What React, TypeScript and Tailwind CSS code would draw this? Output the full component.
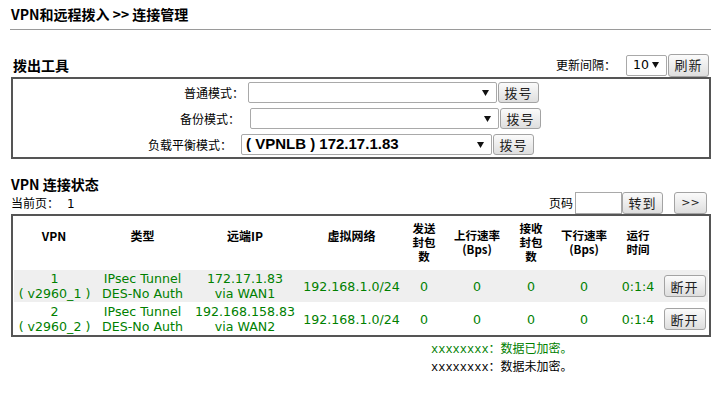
const cols = [82, 95, 110, 103, 42, 64, 44, 62, 46, 48];

function Arrow() {
  return (
    <svg width="7" height="6" viewBox="0 0 7 6" className="shrink-0">
      <path d="M0 0H7L3.5 6Z" fill="#111" />
    </svg>
  );
}

function Select({ w, children }: { w: number; children?: React.ReactNode }) {
  return (
    <div
      className="h-[21px] border border-[#a9a9a9] rounded-[2px] bg-white flex items-center justify-between pl-[4px] pr-[7px] shrink-0"
      style={{ width: w }}
    >
      <span className="truncate">{children}</span>
      <Arrow />
    </div>
  );
}

function Btn({ w, h = 21, children }: { w: number; h?: number; children: React.ReactNode }) {
  return (
    <div
      className="border border-[#a3a3a3] rounded-[3px] bg-linear-to-b from-[#fbfbfb] to-[#dedede] flex items-center justify-center text-[13px] tracking-[1px] text-[#222] shrink-0"
      style={{ width: w, height: h }}
    >
      {children}
    </div>
  );
}

const headers: React.ReactNode[] = [
  "VPN",
  "类型",
  "远端IP",
  "虚拟网络",
  <>发送<br />封包<br />数</>,
  <>上行速率<br />(Bps)</>,
  <>接收<br />封包<br />数</>,
  <>下行速率<br />(Bps)</>,
  <>运行<br />时间</>,
  "",
];

const rows = [
  { id: "1", name: "( v2960_1 )", ip: "172.17.1.83", wan: "via WAN1", bg: "bg-[#efefef]" },
  { id: "2", name: "( v2960_2 )", ip: "192.168.158.83", wan: "via WAN2", bg: "bg-white" },
];

export default function App() {
  return (
    <div className="w-[726px] h-[403px] bg-white pl-[11px] pr-[15px] font-['Noto_Sans_CJK_SC',sans-serif] text-[12px] text-black">
      <div className="pt-[6px] h-[22px] leading-[16px] text-[14px] font-bold">VPN和远程拨入 &gt;&gt; 连接管理</div>
      <div className="mt-[7px] -ml-px h-px bg-[#9a9a9a]" />

      {/* dial-out tools */}
      <div className="mt-[23px] h-[24px] flex items-center justify-between">
        <div className="text-[14px] font-bold pl-[2px]">拨出工具</div>
        <div className="flex items-center mr-[2px]">
          <span className="mr-[10px]">更新间隔：</span>
          <Select w={41}>
            <span className="font-['DejaVu_Sans',sans-serif] text-[12.5px] pl-[2px]">10</span>
          </Select>
          <div className="ml-px">
            <Btn w={41} h={23}>刷新</Btn>
          </div>
        </div>
      </div>
      <div className="h-[82px] border-2 border-[#555] pt-[3px] flex flex-col gap-[5px]">
        <div className="flex items-center h-[21px]">
          <div className="w-[231px] text-right">普通模式：</div>
          <div className="ml-[4px]"><Select w={249} /></div>
          <div className="ml-px"><Btn w={41}>拨号</Btn></div>
        </div>
        <div className="flex items-center h-[21px]">
          <div className="w-[227px] text-right">备份模式：</div>
          <div className="ml-[10px]"><Select w={249} /></div>
          <div className="ml-px"><Btn w={41}>拨号</Btn></div>
        </div>
        <div className="flex items-center h-[21px]">
          <div className="w-[219px] text-right">负载平衡模式：</div>
          <div className="ml-[9px]">
            <Select w={251}>
              <span className="font-['Liberation_Sans',sans-serif] font-bold text-[15px]">( VPNLB ) 172.17.1.83</span>
            </Select>
          </div>
          <div className="ml-px"><Btn w={41}>拨号</Btn></div>
        </div>
      </div>

      {/* connection status */}
      <div className="mt-[17px] leading-[16px] text-[14px] font-bold">VPN 连接状态</div>
      <div className="h-[22px] flex items-center justify-between">
        <div>
          当前页：<span className="ml-[8px] font-['DejaVu_Sans',sans-serif]">1</span>
        </div>
        <div className="flex items-center mr-[4px]">
          <span className="mr-[2px]">页码</span>
          <div className="w-[47px] h-[22px] border border-[#a9a9a9] bg-white" />
          <Btn w={41} h={22}>转到</Btn>
          <div className="ml-[11px]">
            <Btn w={33} h={22}>
              <span className="font-['DejaVu_Sans',sans-serif] text-[11px] tracking-normal">&gt;&gt;</span>
            </Btn>
          </div>
        </div>
      </div>

      <div className="border-2 border-[#555] h-[123px]">
        <div className="flex h-[52px] items-center font-bold text-[11.5px] leading-[14px]">
          {headers.map((h, i) => (
            <div
              key={i}
              className={`text-center ${typeof h === "string" ? "pb-[12px] text-[12px]" : ""}`}
              style={{ width: cols[i] }}
            >
              {h}
            </div>
          ))}
        </div>
        {rows.map((r, idx) => (
          <div
            key={r.id}
            className={`flex h-[32px] items-center mx-px ${r.bg} ${idx === 0 ? "mt-[2px]" : "mt-px"} font-['DejaVu_Sans',sans-serif] text-[12.6px] leading-[15px] text-[#008000]`}
          >
            <div className="text-center" style={{ width: cols[0] - 1 }}>
              {r.id}
              <br />
              {r.name}
            </div>
            <div className="text-center whitespace-nowrap" style={{ width: cols[1] }}>
              IPsec Tunnel
              <br />
              DES-No Auth
            </div>
            <div className="text-center whitespace-nowrap" style={{ width: cols[2] }}>
              {r.ip}
              <br />
              {r.wan}
            </div>
            <div className="text-center whitespace-nowrap" style={{ width: cols[3] }}>192.168.1.0/24</div>
            <div className="text-center" style={{ width: cols[4] }}>0</div>
            <div className="text-center" style={{ width: cols[5] }}>0</div>
            <div className="text-center" style={{ width: cols[6] }}>0</div>
            <div className="text-center" style={{ width: cols[7] }}>0</div>
            <div className="text-center whitespace-nowrap" style={{ width: cols[8] }}>0:1:4</div>
            <div className="flex justify-center" style={{ width: cols[9] - 1 }}>
              <span className="font-['Noto_Sans_CJK_SC',sans-serif] text-black">
                <Btn w={42} h={22}>断开</Btn>
              </span>
            </div>
          </div>
        ))}
      </div>

      <div className="ml-[420px] mt-[3px] leading-[15px]">
        <div className="text-[#008000]">
          <span className="font-['Liberation_Mono',monospace] text-[12px]">xxxxxxxx</span>：数据已加密。
        </div>
        <div>
          <span className="font-['Liberation_Mono',monospace] text-[12px]">xxxxxxxx</span>：数据未加密。
        </div>
      </div>
    </div>
  );
}
